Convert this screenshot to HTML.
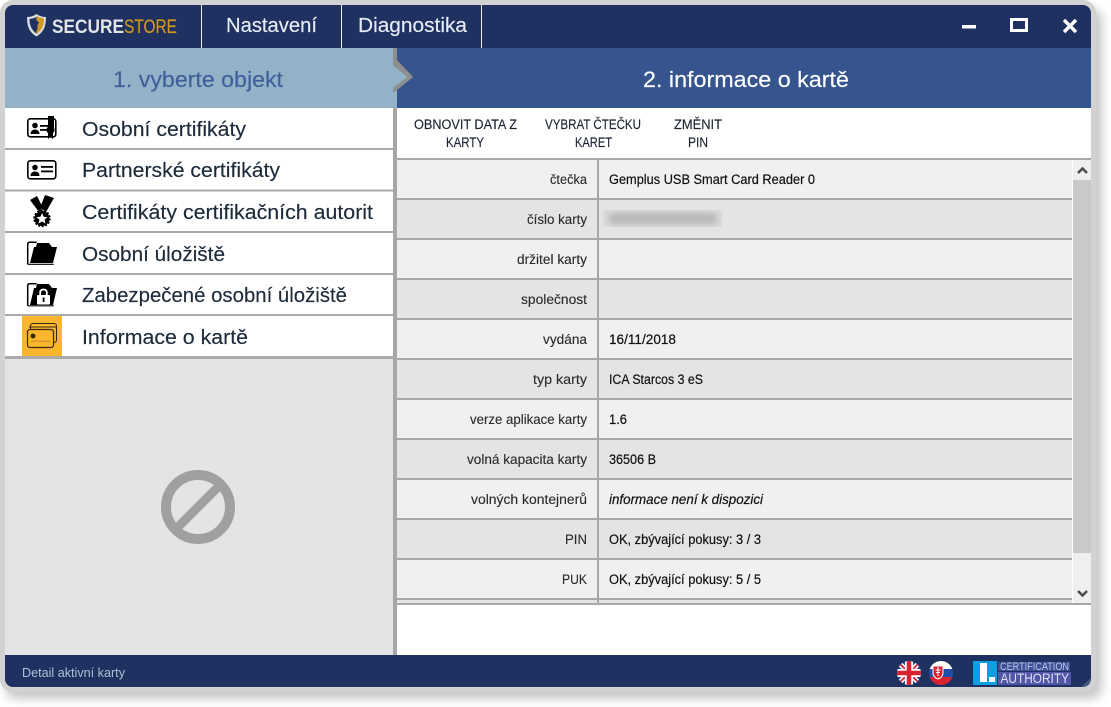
<!DOCTYPE html>
<html><head><meta charset="utf-8"><style>
html,body{margin:0;padding:0;background:#fff;width:1111px;height:707px;overflow:hidden}
svg{display:block}
text{font-family:"Liberation Sans",sans-serif;fill:#1d1d1d}
.l{font-size:20.5px;fill:#1c2a3a;stroke:#1c2a3a;stroke-width:.15}
.b{font-size:13.5px;fill:#1c2433;stroke:#1c2433;stroke-width:.15}
.k{font-size:13.5px;fill:#2a2a2a;stroke:#2a2a2a;stroke-width:.12}
.v{font-size:13.5px;fill:#111;stroke:#111;stroke-width:.2}
</style></head><body>
<svg width="1111" height="707" viewBox="0 0 1111 707" xmlns="http://www.w3.org/2000/svg">
<defs>
<filter id="sh" x="-5%" y="-5%" width="110%" height="110%"><feGaussianBlur stdDeviation="5"/></filter>
<filter id="bl" filterUnits="userSpaceOnUse" x="590" y="200" width="145" height="40"><feGaussianBlur stdDeviation="3.5"/></filter>
<clipPath id="win"><rect x="5" y="5" width="1086" height="682" rx="8"/></clipPath>
<clipPath id="blc"><rect x="603" y="210" width="119" height="17"/></clipPath>
<clipPath id="uk"><circle cx="909" cy="673" r="12"/></clipPath>
<clipPath id="sk"><circle cx="941" cy="673" r="12"/></clipPath>
</defs>
<rect x="5" y="8" width="1097" height="691" rx="12" fill="#000" opacity=".22" filter="url(#sh)"/>
<rect x="0" y="0" width="1096" height="692" rx="13" fill="#d2d2d2"/>
<g clip-path="url(#win)">
<rect x="5" y="5" width="1086" height="682" fill="#fff"/>
<rect x="5" y="5" width="1086" height="43" fill="#1e3160"/>
<rect x="201" y="5" width="1" height="43" fill="#e8ecf2"/>
<rect x="341" y="5" width="1" height="43" fill="#e8ecf2"/>
<rect x="481" y="5" width="1" height="43" fill="#e8ecf2"/>
<rect x="393" y="48" width="698" height="60" fill="#36558f"/>
<rect x="5" y="48" width="388" height="60" fill="#93b2c8"/>
<polygon points="393,62 413,77 393,93 393,108 397,108 397,62" fill="#93b2c8"/>
<polygon points="393,48 397,48 397,60 413,77 393,93 393,88 407,77 393,65" fill="#8f8f8f"/>
<polygon points="393,65 407,77 393,88" fill="#93b2c8"/>
<rect x="5" y="358" width="388" height="297" fill="#e4e4e4"/>
<rect x="5" y="148" width="388" height="2" fill="#aaa"/>
<rect x="5" y="189.500" width="388" height="2" fill="#aaa"/>
<rect x="5" y="231" width="388" height="2" fill="#aaa"/>
<rect x="5" y="273" width="388" height="2" fill="#aaa"/>
<rect x="5" y="314" width="388" height="2" fill="#aaa"/>
<rect x="5" y="356" width="388" height="3" fill="#aaa"/>
<rect x="393" y="108" width="4" height="547" fill="#a6a6a6"/>
<!-- table -->
<rect x="397" y="160" width="675" height="38" fill="#f0f0f0"/>
<rect x="397" y="200" width="675" height="38" fill="#e4e4e4"/>
<rect x="397" y="240" width="675" height="38" fill="#f0f0f0"/>
<rect x="397" y="280" width="675" height="38" fill="#e4e4e4"/>
<rect x="397" y="320" width="675" height="38" fill="#f0f0f0"/>
<rect x="397" y="360" width="675" height="38" fill="#e4e4e4"/>
<rect x="397" y="400" width="675" height="38" fill="#f0f0f0"/>
<rect x="397" y="440" width="675" height="38" fill="#e4e4e4"/>
<rect x="397" y="480" width="675" height="38" fill="#f0f0f0"/>
<rect x="397" y="520" width="675" height="38" fill="#e4e4e4"/>
<rect x="397" y="560" width="675" height="38" fill="#f0f0f0"/>
<rect x="397" y="600" width="675" height="3" fill="#e4e4e4"/>
<g fill="#a8a8a8">
<rect x="397" y="158" width="694" height="2"/>
<rect x="397" y="198" width="675" height="2"/><rect x="397" y="238" width="675" height="2"/>
<rect x="397" y="278" width="675" height="2"/><rect x="397" y="318" width="675" height="2"/>
<rect x="397" y="358" width="675" height="2"/><rect x="397" y="398" width="675" height="2"/>
<rect x="397" y="438" width="675" height="2"/><rect x="397" y="478" width="675" height="2"/>
<rect x="397" y="518" width="675" height="2"/><rect x="397" y="558" width="675" height="2"/>
<rect x="397" y="598" width="675" height="2"/>
<rect x="397" y="603" width="694" height="2"/>
<rect x="597" y="158" width="2" height="445"/>
</g>
<rect x="1073" y="160" width="18" height="443" fill="#efefef"/>
<rect x="1073" y="180" width="18" height="373" fill="#c9c9c9"/>
<path d="M1078 173l4.500-4.500 4.500 4.500" fill="none" stroke="#4a4a4a" stroke-width="2.500"/>
<path d="M1078 591l4.500 4.500 4.500-4.500" fill="none" stroke="#4a4a4a" stroke-width="2.500"/>
<rect x="603" y="210" width="119" height="17" fill="#dcdcdc"/>
<g clip-path="url(#blc)"><rect x="609" y="213" width="108" height="11" fill="#b6b6b6" filter="url(#bl)"/></g>
<rect x="5" y="655" width="1086" height="32" fill="#1e3160"/>
<polygon points="1091,678 1091,687 1081,687" fill="#5a6a8a" opacity=".7"/>
</g>

<!-- logo -->
<path d="M36.500 14c-3 2-6 3-9.500 3 0 9 2 15 9.500 19.500 7.500-4.500 9.500-10.500 9.500-19.500-3.500 0-6.500-1-9.500-3z" fill="#d8dbe0"/>
<path d="M36.500 17c-2 1-4 1.500-7 2 0 6.500 2 11 7 14.500z" fill="#1e3160"/>
<path d="M36.500 16c3 1.500 4.500 2 7.500 2.500 0 7-2 11.500-7.500 15.500z" fill="#d49a20"/>
<circle cx="36.500" cy="23" r="2.200" fill="#1e3160"/><rect x="35.500" y="24" width="2" height="6" fill="#1e3160"/>
<text x="52" y="33" textLength="72" lengthAdjust="spacingAndGlyphs" style="font-size:19.500px;font-weight:700;fill:#e4e5e8">SECURE</text>
<text x="124" y="33" textLength="53" lengthAdjust="spacingAndGlyphs" style="font-size:19.500px;fill:#d0971f;stroke:#d0971f;stroke-width:.2">STORE</text>
<text x="226" y="32" textLength="91" lengthAdjust="spacingAndGlyphs" style="font-size:20.500px;fill:#e6ecf4;stroke:#e6ecf4;stroke-width:.15">Nastavení</text>
<text x="358" y="32" textLength="109" lengthAdjust="spacingAndGlyphs" style="font-size:20.500px;fill:#e6ecf4;stroke:#e6ecf4;stroke-width:.15">Diagnostika</text>
<!-- win controls -->
<rect x="962" y="25" width="14" height="3.500" fill="#fff"/>
<rect x="1011.500" y="19.500" width="15" height="11" fill="none" stroke="#fff" stroke-width="3"/>
<path d="M1064 20l12 12M1076 20l-12 12" stroke="#fff" stroke-width="3.400" fill="none"/>

<text x="113" y="87" textLength="170" lengthAdjust="spacingAndGlyphs" style="font-size:22.500px;fill:#3f5e9a;stroke:#3f5e9a;stroke-width:.15">1. vyberte objekt</text>
<text x="643" y="87" textLength="206" lengthAdjust="spacingAndGlyphs" style="font-size:22.500px;fill:#fff;stroke:#fff;stroke-width:.15">2. informace o kartě</text>

<text class="l" x="82" y="136" textLength="164" lengthAdjust="spacingAndGlyphs">Osobní certifikáty</text>
<text class="l" x="82" y="177" textLength="198" lengthAdjust="spacingAndGlyphs">Partnerské certifikáty</text>
<text class="l" x="82" y="219" textLength="291" lengthAdjust="spacingAndGlyphs">Certifikáty certifikačních autorit</text>
<text class="l" x="82" y="261" textLength="143" lengthAdjust="spacingAndGlyphs">Osobní úložiště</text>
<text class="l" x="82" y="302" textLength="265" lengthAdjust="spacingAndGlyphs">Zabezpečené osobní úložiště</text>
<text class="l" x="82" y="344" textLength="166" lengthAdjust="spacingAndGlyphs">Informace o kartě</text>

<!-- icon 1 -->
<rect x="27.800" y="118.800" width="28" height="18" rx="2.500" fill="#fff" stroke="#000" stroke-width="1.600"/>
<circle cx="35" cy="125.500" r="2.800"/><path d="M30.500 134c0-6 9-6 9 0z"/>
<rect x="40" y="125" width="8" height="1.800"/><rect x="40" y="129" width="8" height="1.800"/>
<rect x="48" y="116" width="6" height="13"/>
<circle cx="50.500" cy="130" r="4"/>
<path d="M48 133v6l2.500-2 2.500 2v-6z"/>
<!-- icon 2 -->
<rect x="27.800" y="160.800" width="28" height="18" rx="2.500" fill="#fff" stroke="#000" stroke-width="1.600"/>
<circle cx="35" cy="167.500" r="2.800"/><path d="M30.500 176c0-6 9-6 9 0z"/>
<rect x="41" y="166" width="12" height="1.800"/><rect x="41" y="170.500" width="12" height="1.800"/>
<!-- icon 3 medal -->
<path d="M30 200l7-4 6 12-4 4z"/><path d="M54 198l-9-3-5 13 6 4z"/>
<circle cx="42" cy="218.500" r="7.500"/>
<circle cx="42" cy="218.500" r="7.800" fill="none" stroke="#000" stroke-width="1.800" stroke-dasharray="2 1.500"/>
<polygon points="42,213 43.600,216.800 47.500,217.100 44.500,219.700 45.500,223.500 42,221.500 38.500,223.500 39.500,219.700 36.500,217.100 40.400,216.800" fill="#fff"/>
<!-- icon 4 folder -->
<path d="M27.700 264.300v-20q0-2 2-2h7" fill="none" stroke="#000" stroke-width="1.500"/>
<path d="M27.700 264.300h26" stroke="#000" stroke-width="1.200"/>
<path d="M37 243h12l3 4h5l-4 16H30l4-16h2z"/>
<!-- icon 5 folder lock -->
<path d="M27.700 305.800v-20q0-2 2-2h7" fill="none" stroke="#000" stroke-width="1.500"/>
<path d="M27.700 305.800h26" stroke="#000" stroke-width="1.200"/>
<path d="M37 284h12l3 4h5l-4 17H30l4-17h2z"/>
<rect x="37" y="295" width="13" height="9.500" rx="1" fill="#fff"/>
<path d="M40.200 295v-2.500q0-3 3.300-3t3.300 3v2.500" fill="none" stroke="#fff" stroke-width="1.800"/>
<rect x="42.700" y="297.500" width="1.800" height="4.500"/>
<!-- icon 6 -->
<rect x="22" y="316" width="40" height="40" fill="#fcb52f"/>
<rect x="30.500" y="323.500" width="26" height="19" rx="2.500" fill="none" stroke="#3a2a08" stroke-width="1.100"/>
<path d="M29 327h27" stroke="#3a2a08" stroke-width="1"/>
<rect x="27.500" y="329.500" width="26" height="18" rx="2.500" fill="#fcb52f" stroke="#3a2a08" stroke-width="1.200"/>
<circle cx="33" cy="336" r="2.500" fill="#3a2a08"/>
<rect x="31" y="340.500" width="19" height="1.600" fill="#d9962a"/>

<!-- buttons -->
<text class="b" x="414" y="129" textLength="103" lengthAdjust="spacingAndGlyphs">OBNOVIT DATA Z</text>
<text class="b" x="446" y="147" textLength="38" lengthAdjust="spacingAndGlyphs">KARTY</text>
<text class="b" x="545" y="129" textLength="96" lengthAdjust="spacingAndGlyphs">VYBRAT ČTEČKU</text>
<text class="b" x="575" y="147" textLength="37" lengthAdjust="spacingAndGlyphs">KARET</text>
<text class="b" x="674" y="129" textLength="48" lengthAdjust="spacingAndGlyphs">ZMĚNIT</text>
<text class="b" x="688" y="147" textLength="20" lengthAdjust="spacingAndGlyphs">PIN</text>

<!-- labels -->
<text class="k" x="550" y="184" textLength="37" lengthAdjust="spacingAndGlyphs">čtečka</text>
<text class="k" x="527" y="224" textLength="60" lengthAdjust="spacingAndGlyphs">číslo karty</text>
<text class="k" x="517" y="264" textLength="70" lengthAdjust="spacingAndGlyphs">držitel karty</text>
<text class="k" x="521" y="304" textLength="66" lengthAdjust="spacingAndGlyphs">společnost</text>
<text class="k" x="543" y="344" textLength="44" lengthAdjust="spacingAndGlyphs">vydána</text>
<text class="k" x="533" y="384" textLength="54" lengthAdjust="spacingAndGlyphs">typ karty</text>
<text class="k" x="470" y="424" textLength="117" lengthAdjust="spacingAndGlyphs">verze aplikace karty</text>
<text class="k" x="467" y="464" textLength="120" lengthAdjust="spacingAndGlyphs">volná kapacita karty</text>
<text class="k" x="471" y="504" textLength="116" lengthAdjust="spacingAndGlyphs">volných kontejnerů</text>
<text class="k" x="565" y="544" textLength="22" lengthAdjust="spacingAndGlyphs">PIN</text>
<text class="k" x="562" y="584" textLength="25" lengthAdjust="spacingAndGlyphs">PUK</text>

<text class="v" x="609" y="184" textLength="206" lengthAdjust="spacingAndGlyphs">Gemplus USB Smart Card Reader 0</text>
<text class="v" x="609" y="344" textLength="67" lengthAdjust="spacingAndGlyphs">16/11/2018</text>
<text class="v" x="609" y="384" textLength="94" lengthAdjust="spacingAndGlyphs">ICA Starcos 3 eS</text>
<text class="v" x="609" y="424" textLength="18" lengthAdjust="spacingAndGlyphs">1.6</text>
<text class="v" x="609" y="464" textLength="47" lengthAdjust="spacingAndGlyphs">36506 B</text>
<text class="v" x="609" y="504" textLength="154" lengthAdjust="spacingAndGlyphs" style="font-style:italic">informace není k dispozici</text>
<text class="v" x="609" y="544" textLength="152" lengthAdjust="spacingAndGlyphs">OK, zbývající pokusy: 3 / 3</text>
<text class="v" x="609" y="584" textLength="152" lengthAdjust="spacingAndGlyphs">OK, zbývající pokusy: 5 / 5</text>

<!-- no sign -->
<circle cx="198" cy="507" r="32" fill="none" stroke="#a0a0a0" stroke-width="10"/>
<path d="M175 530l46-46" stroke="#a0a0a0" stroke-width="9"/>

<!-- footer -->
<text x="22" y="677" textLength="103" lengthAdjust="spacingAndGlyphs" style="font-size:12.500px;fill:#b0bfd4">Detail aktivní karty</text>
<g clip-path="url(#uk)">
<rect x="897" y="661" width="24" height="24" fill="#2a3f8f"/>
<path d="M897 661l24 24M921 661l-24 24" stroke="#fff" stroke-width="5"/>
<path d="M897 661l24 24M921 661l-24 24" stroke="#d8232f" stroke-width="1.800"/>
<path d="M909 661v24M897 673h24" stroke="#fff" stroke-width="8"/>
<path d="M909 661v24M897 673h24" stroke="#d8232f" stroke-width="4.500"/>
</g>
<g clip-path="url(#sk)">
<rect x="929" y="661" width="24" height="8" fill="#fff"/>
<rect x="929" y="669" width="24" height="8" fill="#1d4fa8"/>
<rect x="929" y="677" width="24" height="8" fill="#d8232f"/>
<path d="M933 666h10v7q0 4-5 6-5-2-5-6z" fill="#d8232f" stroke="#fff" stroke-width="1"/>
<path d="M938 667v9M935.500 670h5M936 672.500h4" stroke="#fff" stroke-width="1"/>
</g>
<rect x="973" y="661" width="24" height="24" fill="#0a9fe2"/>
<rect x="980" y="663" width="7" height="19" fill="#fff"/>
<rect x="989" y="677" width="6" height="5" fill="#fff"/>
<rect x="998" y="662" width="72" height="9" fill="#3d4f96"/>
<rect x="998" y="672" width="73" height="13" fill="#5156a6"/>
<text x="1000" y="670" textLength="69" lengthAdjust="spacingAndGlyphs" style="font-size:11px;fill:#c0c8e8">CERTIFICATION</text>
<text x="1000.500" y="683" textLength="68.500" lengthAdjust="spacingAndGlyphs" style="font-size:14px;fill:#dde0f4">AUTHORITY</text>
</svg>
</body></html>
